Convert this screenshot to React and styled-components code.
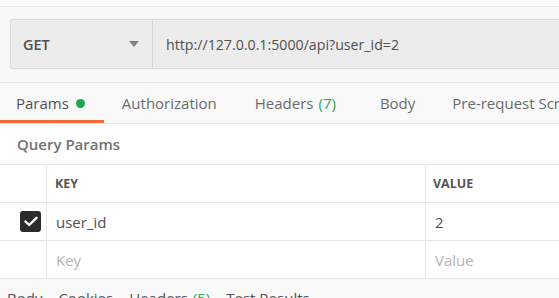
import React from 'react';
import styled, { createGlobalStyle } from 'styled-components';

const Global = createGlobalStyle`
  html, body {
    margin: 0;
    padding: 0;
    background: #ffffff;
    font-family: "Open Sans", "Liberation Sans", sans-serif;
    overflow: hidden;
  }
`;

const Page = styled.div`
  width: 559px;
  height: 298px;
  overflow: hidden;
  display: flex;
  flex-direction: column;
  & > * {
    flex-shrink: 0;
  }
`;

const TopStrip = styled.div`
  height: 6px;
  background: #fafafa;
  border-bottom: 1px solid #e6e6e6;
`;

const UrlArea = styled.div`
  background: #f8f8f8;
  padding: 12px 0 13px 10px;
`;

const UrlBar = styled.div`
  display: flex;
  height: 48px;
  background: #ececec;
  border: 1px solid #d9d9d9;
  border-right: none;
  border-radius: 3px 0 0 3px;
`;

const Method = styled.div`
  width: 142px;
  display: flex;
  align-items: center;
  justify-content: space-between;
  padding: 0 13px 0 12px;
  box-sizing: border-box;
  border-right: 1px solid #d6d6d6;
  font-size: 14.5px;
  font-weight: 600;
  color: #505050;
`;

const Caret = styled.span`
  width: 0;
  height: 0;
  border-left: 5px solid transparent;
  border-right: 5px solid transparent;
  border-top: 6px solid #808080;
`;

const Url = styled.div`
  display: flex;
  align-items: center;
  padding-left: 13px;
  font-size: 14.2px;
  color: #505050;
`;

const Tabs = styled.div`
  display: flex;
  height: 40px;
  background: #f9f9f9;
  border-top: 1px solid #e6e6e6;
  border-bottom: 1px solid #e6e6e6;
  white-space: nowrap;
`;

const Tab = styled.div`
  display: flex;
  align-items: center;
  padding: 0 ${p => p.$pr ?? 18}px 0 ${p => p.$pl ?? 18}px;
  font-size: 15px;
  box-shadow: ${p => (p.$active ? 'inset 0 -3px 0 #f26b3a' : 'none')};
  color: ${p => (p.$active ? '#505050' : '#6b6b6b')};
`;

const Dot = styled.span`
  width: 9px;
  height: 9px;
  border-radius: 50%;
  background: #21a64f;
  margin-left: 7px;
`;

const Count = styled.span`
  color: #2fa35a;
  margin-left: 5px;
`;

const Section = styled.div`
  height: 40px;
  display: flex;
  align-items: center;
  padding-left: 17px;
  font-size: 15px;
  font-weight: 600;
  color: #727272;
  background: #ffffff;
`;

const Table = styled.div`
  display: grid;
  grid-template-columns: 47px 379px 1fr;
  background: #ffffff;
  border-top: 1px solid #e6e6e6;
`;

const Cell = styled.div`
  height: 37px;
  display: flex;
  align-items: center;
  padding-left: ${p => p.$pad || 0}px;
  border-bottom: 1px solid #e6e6e6;
  border-right: ${p => (p.$last ? 'none' : '1px solid #e6e6e6')};
  font-size: ${p => (p.$head ? 12.5 : 15)}px;
  font-weight: ${p => (p.$head ? 700 : 400)};
  color: ${p => (p.$ph ? '#b4b4b4' : p.$head ? '#555555' : '#505050')};
  justify-content: ${p => (p.$center ? 'flex-end' : 'flex-start')};
  padding-right: ${p => (p.$center ? 5 : 0)}px;
`;

const Check = styled.span`
  width: 21px;
  height: 21px;
  border-radius: 3px;
  background: #2b2b2b;
  display: flex;
  align-items: center;
  justify-content: center;
`;

const Bottom = styled.div`
  flex: 1;
  background: #f9f9f9;
  display: flex;
  gap: 16px;
  padding: 9px 0 0 7px;
  font-size: 15px;
  color: #505050;
  white-space: nowrap;
`;

export default function App() {
  return (
    <Page>
      <Global />
      <TopStrip />
      <UrlArea>
        <UrlBar>
          <Method>
            GET
            <Caret />
          </Method>
          <Url>http://127.0.0.1:5000/api?user_id=2</Url>
        </UrlBar>
      </UrlArea>
      <Tabs>
        <Tab $active $pl={16} $pr={19}>
          Params<Dot />
        </Tab>
        <Tab>Authorization</Tab>
        <Tab $pl={20} $pr={22}>
          Headers<Count>(7)</Count>
        </Tab>
        <Tab $pl={22} $pr={18}>Body</Tab>
        <Tab $pl={19}>Pre-request Script</Tab>
      </Tabs>
      <Section>Query Params</Section>
      <Table>
        <Cell />
        <Cell $head $pad={8}>KEY</Cell>
        <Cell $head $last $pad={7}>VALUE</Cell>

        <Cell $center>
          <Check>
            <svg width="14" height="11" viewBox="0 0 14 11">
              <path d="M1.5 5.5 L5.2 9 L12.5 1.8" fill="none" stroke="#fff" strokeWidth="2.4" strokeLinecap="round" strokeLinejoin="round" />
            </svg>
          </Check>
        </Cell>
        <Cell $pad={9}>user_id</Cell>
        <Cell $last $pad={9}>2</Cell>

        <Cell />
        <Cell $pad={9} $ph>Key</Cell>
        <Cell $last $pad={9} $ph>Value</Cell>
      </Table>
      <Bottom>
        <span>Body</span>
        <span>Cookies</span>
        <span>
          Headers<Count>(5)</Count>
        </span>
        <span>Test Results</span>
      </Bottom>
    </Page>
  );
}
